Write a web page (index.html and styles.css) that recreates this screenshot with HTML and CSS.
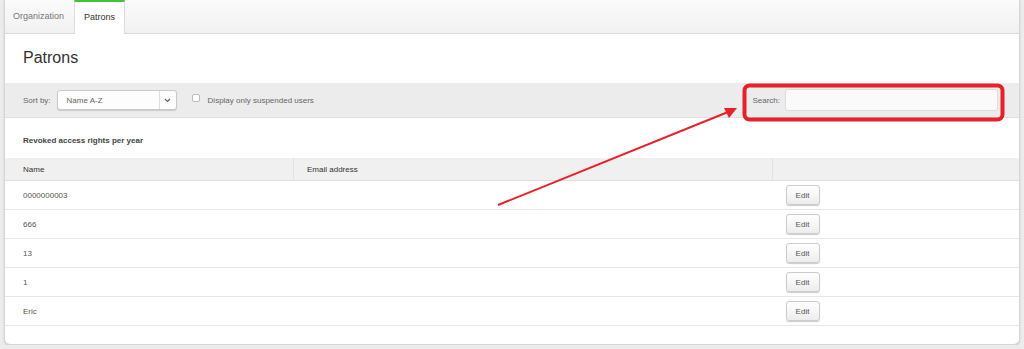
FILE: index.html
```html
<!DOCTYPE html>
<html lang="en">
<head>
  <meta charset="UTF-8">
  <title>Patrons</title>
  <link rel="stylesheet" href="styles.css">
</head>
<body>
  <div class="panel">
    <div class="tabs">
      <div class="tab">Organization</div>
      <div class="tab active">Patrons</div>
    </div>

    <h2>Patrons</h2>

    <div class="toolbar">
      <div class="sort">
        <label>Sort by:</label>
        <div class="select">
          <span>Name A-Z</span>
          <span class="caret">
            <svg width="7" height="5" viewBox="0 0 7 5"><path d="M1 1 L3.5 3.5 L6 1" fill="none" stroke="#666" stroke-width="1.2"/></svg>
          </span>
        </div>
        <span class="check"></span>
        <label>Display only suspended users</label>
      </div>
      <div class="search">
        <label>Search:</label>
        <div class="search-input"></div>
      </div>
    </div>

    <div class="revoked">Revoked access rights per year</div>

    <table class="patrons">
      <thead>
        <tr><th class="c-name">Name</th><th class="c-email">Email address</th><th></th></tr>
      </thead>
      <tbody>
        <tr><td>0000000003</td><td></td><td><button>Edit</button></td></tr>
        <tr><td>666</td><td></td><td><button>Edit</button></td></tr>
        <tr><td>13</td><td></td><td><button>Edit</button></td></tr>
        <tr><td>1</td><td></td><td><button>Edit</button></td></tr>
        <tr><td>Eric</td><td></td><td><button>Edit</button></td></tr>
      </tbody>
    </table>
  </div>

  <!-- screenshot annotation -->
  <svg class="annotation" width="1024" height="349" viewBox="0 0 1024 349">
    <rect x="744.5" y="85.5" width="258" height="34" rx="5" fill="none" stroke="#e8202a" stroke-width="4"/>
    <line x1="498" y1="205" x2="728" y2="112" stroke="#e8202a" stroke-width="2"/>
    <path d="M737 108 L724 108 L729 118 Z" fill="#e8202a"/>
  </svg>
</body>
</html>
```

FILE: styles.css
```css
body {
  font-family: 'Liberation Sans', Arial, sans-serif;
  font-size: 8px;
  color: #444;
  background: #ececec;
  margin: 0;
}

.panel {
  margin: 0 4px 0 4px;
  height: 345px;
  box-sizing: border-box;
  background: #fff;
  border: 1px solid #d6d6d6;
  border-top: none;
  border-radius: 0 0 6px 6px;
  box-shadow: 0 1px 2px rgba(0,0,0,0.15);
  overflow: hidden;
}

.tabs {
  display: flex;
  height: 33px;
  background: linear-gradient(#fbfbfb, #f1f1f1);
  border-bottom: 1px solid #dcdcdc;
}

.tab {
  padding: 0 10px 0 8px;
  line-height: 33px;
  font-size: 9px;
  color: #777;
}

.tab.active {
  width: 51px;
  box-sizing: border-box;
  text-align: center;
  padding: 0;
  color: #333;
  background: #fff;
  border-top: 2px solid #3ec43e;
  border-left: 1px solid #dcdcdc;
  border-right: 1px solid #dcdcdc;
  line-height: 31px;
  height: 34px;
}

h2 {
  font-weight: normal;
  font-size: 16px;
  color: #333;
  margin: 0;
  padding: 15px 0 0 18px;
  height: 34px;
}

.toolbar {
  display: flex;
  justify-content: space-between;
  align-items: center;
  height: 34px;
  background: #ececec;
  border-bottom: 1px solid #e0e0e0;
  padding: 0 21px 0 18px;
}

.sort {
  display: flex;
  align-items: center;
  color: #666;
}

.select {
  display: flex;
  justify-content: space-between;
  align-items: center;
  width: 120px;
  height: 20px;
  box-sizing: border-box;
  margin-left: 6px;
  background: #fdfdfd;
  border: 1px solid #c9c9c9;
  border-radius: 3px;
  box-shadow: 0 1px 1px rgba(0,0,0,0.15);
  padding-left: 9px;
}

.caret {
  display: flex;
  align-items: center;
  justify-content: center;
  width: 16px;
  height: 18px;
  border-left: 1px solid #ddd;
}

.check {
  width: 6px;
  height: 6px;
  border: 1px solid #bbb;
  border-radius: 2px;
  background: #fff;
  margin: -4px 8px 0 15px;
}

.search {
  display: flex;
  align-items: center;
  color: #666;
}

.search-input {
  width: 213px;
  height: 22px;
  box-sizing: border-box;
  margin-left: 5px;
  background: #fafafa;
  border: 1px solid #ddd;
  border-radius: 3px;
}

.revoked {
  font-weight: bold;
  color: #444;
  padding: 18px 0 0 18px;
  height: 22px;
}

.patrons {
  width: 100%;
  border-collapse: collapse;
}

.patrons th {
  text-align: left;
  font-weight: normal;
  color: #333;
  background: #f0f0f0;
  height: 22px;
  padding: 0 0 0 13px;
  border-bottom: 1px solid #dedede;
  border-left: 1px solid #e2e2e2;
}

.patrons th.c-name {
  width: 270px;
  padding-left: 18px;
  border-left: none;
}

.patrons th.c-email {
  width: 465px;
}

.patrons td {
  height: 28px;
  padding: 0 0 0 13px;
  border-bottom: 1px solid #e6e6e6;
  color: #555;
}

.patrons td:first-child {
  padding-left: 18px;
}

button {
  font-family: 'Liberation Sans', Arial, sans-serif;
  font-size: 8px;
  color: #555;
  width: 34px;
  height: 20px;
  background: linear-gradient(#fff, #ededed);
  border: 1px solid #ccc;
  border-radius: 3px;
  box-shadow: 0 1px 1px rgba(0,0,0,0.2);
  padding: 0;
  cursor: pointer;
}

.annotation {
  position: absolute;
  left: 0;
  top: 0;
  pointer-events: none;
}
```
